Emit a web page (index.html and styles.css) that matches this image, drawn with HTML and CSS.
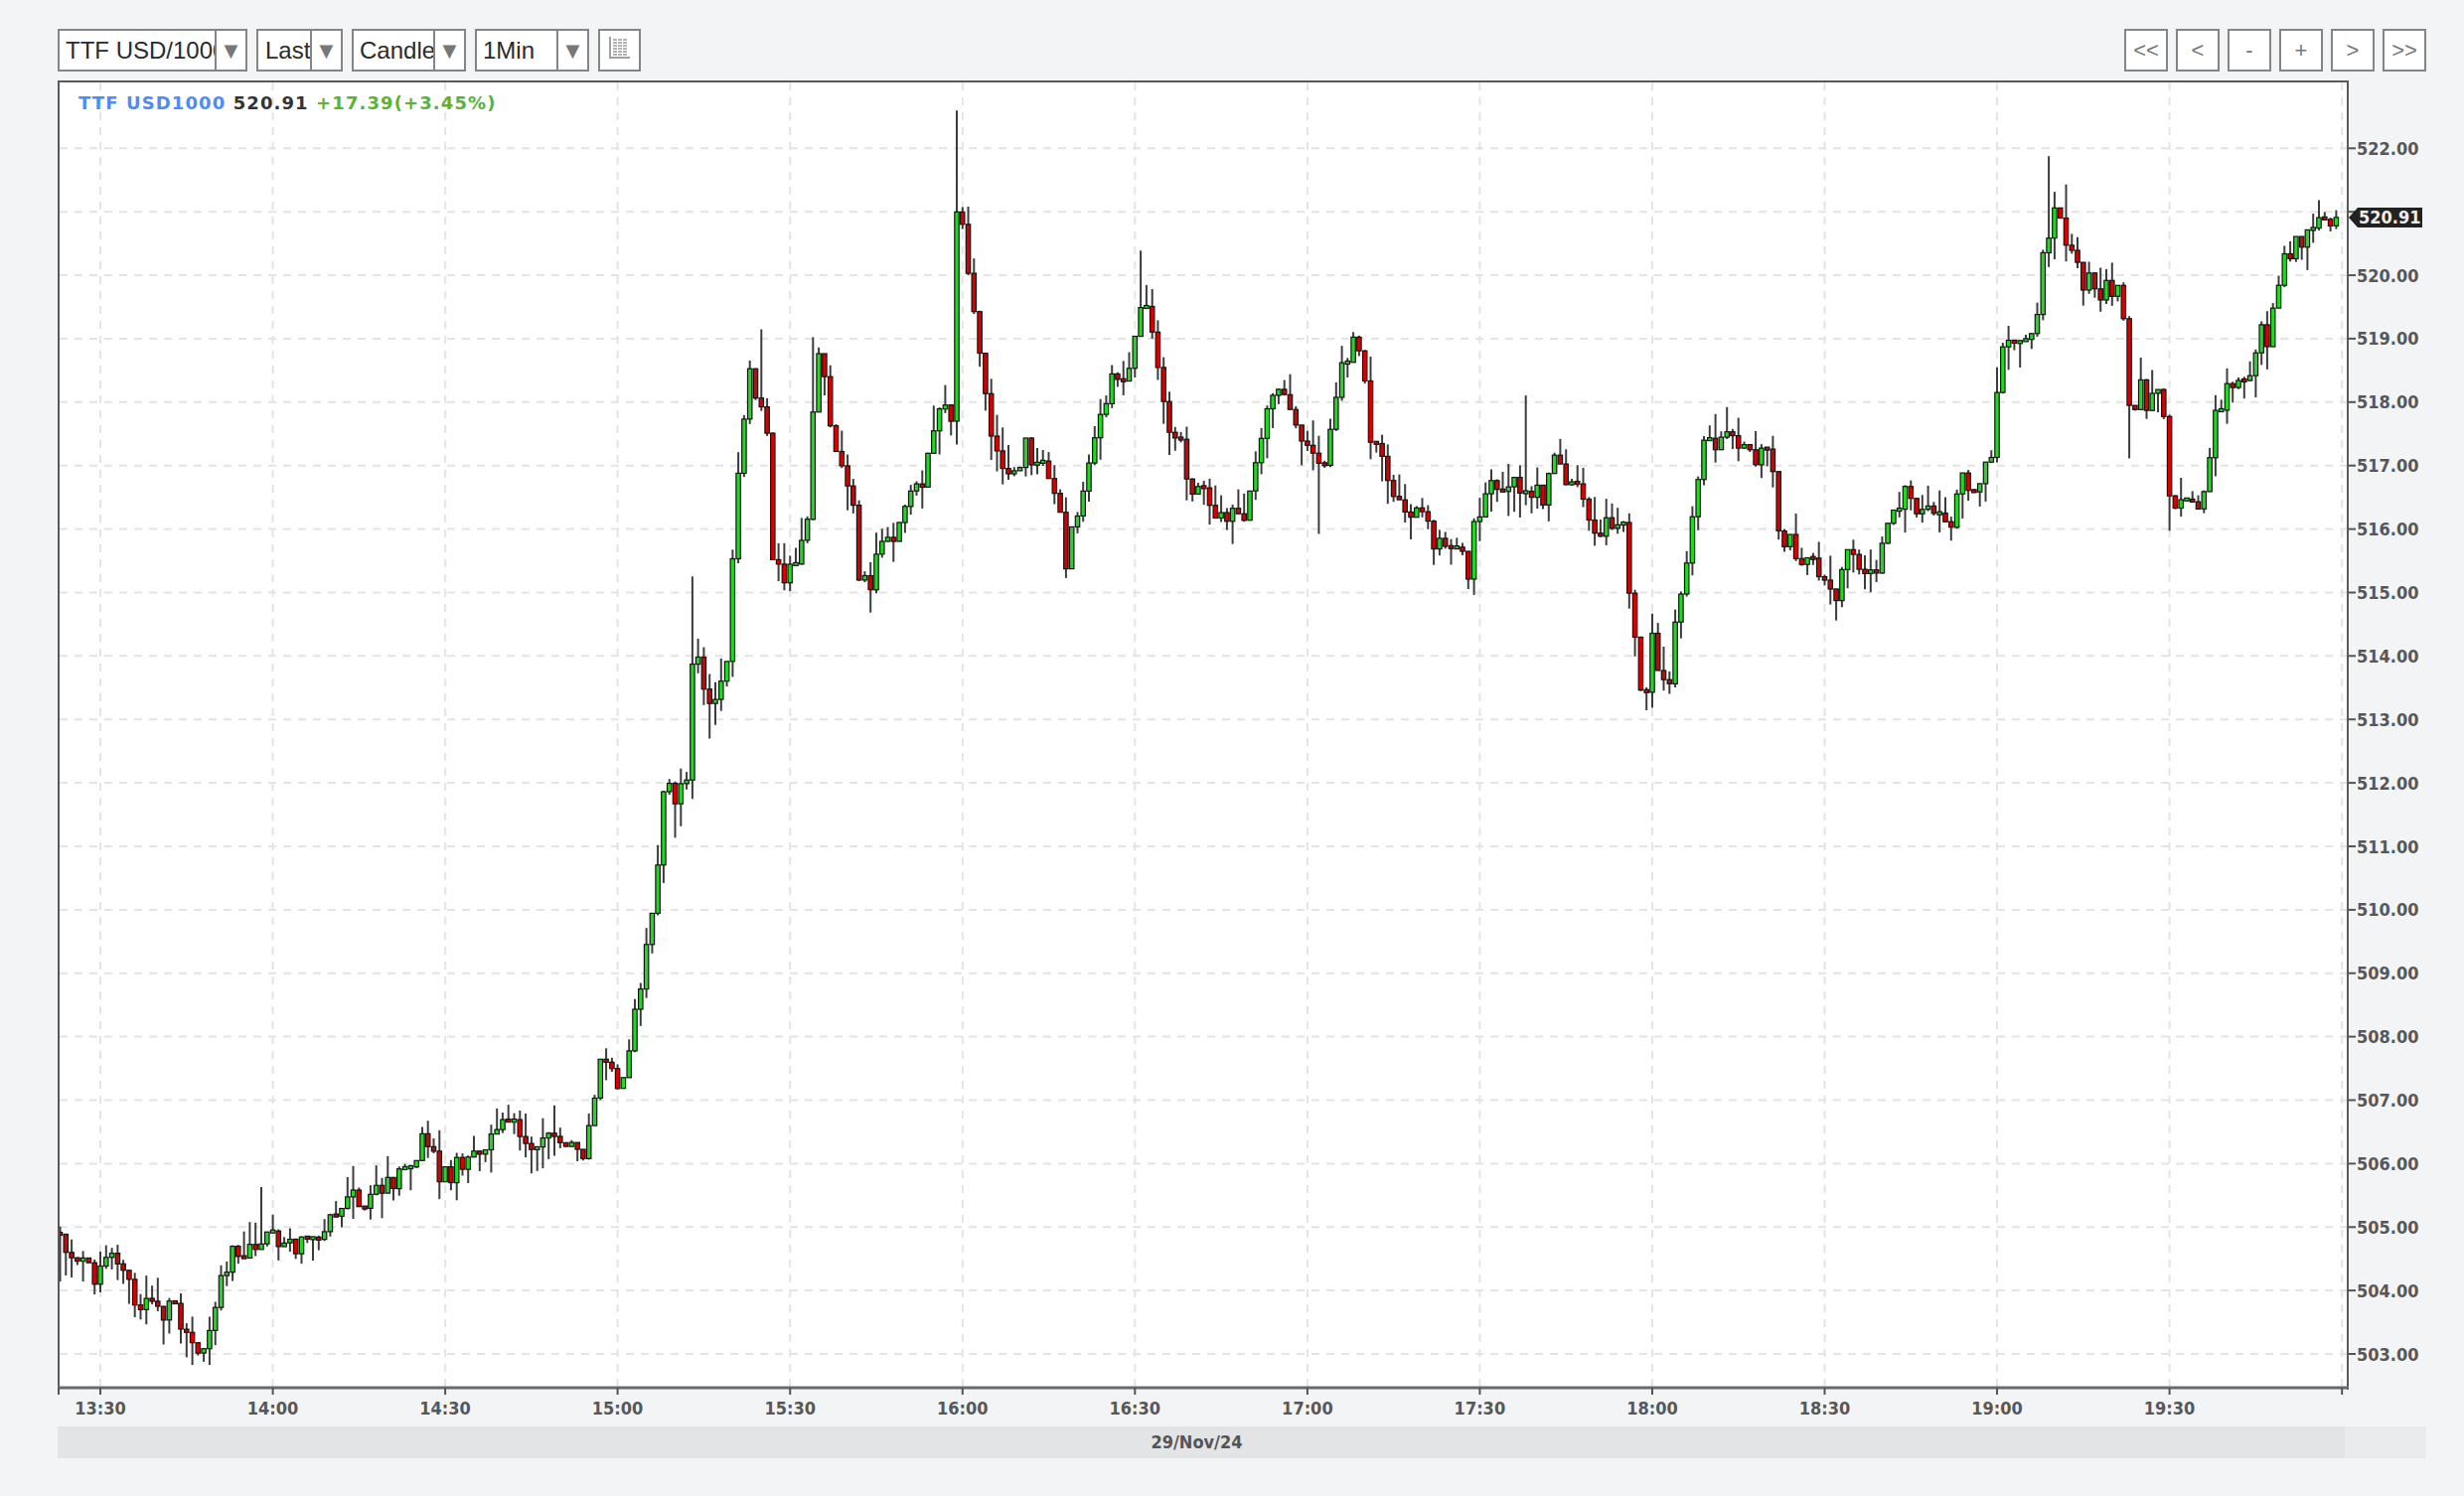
FILE: index.html
```html
<!DOCTYPE html>
<html>
<head>
<meta charset="utf-8">
<title>TTF USD1000 chart</title>
<link rel="stylesheet" href="styles.css">
</head>
<body>
<div class="page">
  <div class="toolbar">
    <div class="tools-left">
      <div class="select"><span class="sel-text w-symbol">TTF USD/1000</span><span class="sel-arrow">▼</span></div>
      <div class="select"><span class="sel-text w-last">Last</span><span class="sel-arrow">▼</span></div>
      <div class="select"><span class="sel-text w-type">Candle</span><span class="sel-arrow">▼</span></div>
      <div class="select"><span class="sel-text w-type">1Min</span><span class="sel-arrow">▼</span></div>
      <div class="btn icon-btn">
        <svg width="39" height="39" viewBox="0 0 39 39">
          <rect class="ico-line" x="9" y="6" width="2" height="22"/>
          <rect class="ico-line" x="9" y="26" width="21" height="2"/>
          <g class="ico-cell">
            <rect x="13" y="8" width="4" height="2"/><rect x="18" y="8" width="4" height="2"/><rect x="23" y="8" width="4" height="2"/>
            <rect x="13" y="11" width="4" height="2"/><rect x="18" y="11" width="4" height="2"/><rect x="23" y="11" width="4" height="2"/>
            <rect x="13" y="14" width="4" height="2"/><rect x="18" y="14" width="4" height="2"/><rect x="23" y="14" width="4" height="2"/>
            <rect x="13" y="17" width="4" height="2"/><rect x="18" y="17" width="4" height="2"/><rect x="23" y="17" width="4" height="2"/>
            <rect x="13" y="20" width="4" height="2"/><rect x="18" y="20" width="4" height="2"/><rect x="23" y="20" width="4" height="2"/>
            <rect x="13" y="23" width="4" height="2"/><rect x="18" y="23" width="4" height="2"/><rect x="23" y="23" width="4" height="2"/>
          </g>
        </svg>
      </div>
    </div>
    <div class="tools-right">
      <div class="btn nav-btn">&lt;&lt;</div>
      <div class="btn nav-btn">&lt;</div>
      <div class="btn nav-btn">-</div>
      <div class="btn nav-btn">+</div>
      <div class="btn nav-btn">&gt;</div>
      <div class="btn nav-btn">&gt;&gt;</div>
    </div>
  </div>
  <div class="chart">
    <svg id="chart" class="chart-svg" width="2384" height="1355" viewBox="0 0 2384 1355"></svg>
  </div>
  <div class="datebar">
    <div class="date-main">29/Nov/24</div>
    <div class="date-tail"></div>
  </div>
</div>
<script src="chart.js"></script>
</body>
</html>
```

FILE: styles.css
```css
html, body {
  margin: 0;
  padding: 0;
  background: #f3f4f6;
}
.page {
  padding-top: 29px;
  width: 2480px;
  height: 1506px;
  box-sizing: border-box;
}
.toolbar {
  display: flex;
  justify-content: space-between;
  align-items: center;
  margin-left: 58px;
  width: 2384px;
  height: 43px;
}
.tools-left, .tools-right {
  display: flex;
  height: 43px;
}
.tools-left { gap: 9px; }
.tools-right { gap: 8px; }
.select {
  display: flex;
  height: 43px;
  box-sizing: border-box;
  border: 2px solid #858585;
  background: #fff;
}
.sel-text {
  display: block;
  box-sizing: border-box;
  padding-left: 6px;
  overflow: hidden;
  white-space: nowrap;
  font-family: "Liberation Sans", Arial, sans-serif;
  font-size: 24px;
  line-height: 39px;
  color: #2a2a2a;
}
.w-symbol { width: 156px; }
.w-last { width: 52px; padding-left: 7px; }
.w-type { width: 80px; padding-left: 6px; }
.sel-arrow {
  display: block;
  width: 31px;
  box-sizing: border-box;
  border-left: 2px solid #858585;
  text-align: center;
  font-family: "DejaVu Sans", sans-serif;
  font-size: 18px;
  line-height: 39px;
  color: #777;
}
.btn {
  width: 44px;
  height: 43px;
  box-sizing: border-box;
  border: 2px solid #858585;
  background: #fff;
  display: flex;
  align-items: center;
  justify-content: center;
}
.icon-btn { width: 43px; }
.ico-line { fill: #a0a0a0; }
.ico-cell rect { fill: #b4b4b4; }
.nav-btn {
  font-family: "Liberation Sans", Arial, sans-serif;
  font-size: 22px;
  color: #777;
  line-height: 39px;
}
.chart {
  margin-top: 9px;
  margin-left: 58px;
  width: 2384px;
  height: 1355px;
}
.chart-svg { display: block; }
.plot-bg { fill: #fff; }
.grid {
  stroke: #e4e4e4;
  stroke-width: 2;
  stroke-dasharray: 8 7;
}
.frame {
  stroke: #5a5a5a;
  stroke-width: 2;
}
.axis-x {
  stroke: #6a6a6a;
  stroke-width: 3;
}
.tick {
  stroke: #555;
  stroke-width: 2;
}
.wick {
  stroke: #3c3c3c;
  stroke-width: 2;
}
.up { fill: #22d822; stroke: #151515; stroke-width: 1.2; }
.dn { fill: #d60000; stroke: #151515; stroke-width: 1.2; }
.ax-label {
  font-family: "DejaVu Sans Condensed", "DejaVu Sans", sans-serif;
  font-stretch: condensed;
  font-weight: bold;
  font-size: 18px;
  fill: #575757;
}
.title {
  font-family: "DejaVu Sans", sans-serif;
  font-weight: bold;
  font-size: 18px;
  letter-spacing: 1.1px;
}
.t-sym { fill: #4d8cf5; }
.t-last { fill: #333; }
.t-chg { fill: #5cb137; }
.tag-bg { fill: #222; }
.tag-text {
  font-family: "DejaVu Sans Condensed", "DejaVu Sans", sans-serif;
  font-stretch: condensed;
  font-weight: bold;
  font-size: 18px;
  fill: #eee;
}
.datebar {
  display: flex;
  margin-left: 58px;
  width: 2384px;
  height: 32px;
}
.date-main {
  width: 2302px;
  box-sizing: border-box;
  padding-right: 9px;
  background: #e3e4e6;
  text-align: center;
  font-family: "DejaVu Sans Condensed", "DejaVu Sans", sans-serif;
  font-stretch: condensed;
  font-weight: bold;
  font-size: 18px;
  line-height: 32px;
  color: #555;
}
.date-tail {
  flex: 1;
  background: #eaebed;
}
```

FILE: chart.js
```js
(function () {
  var svg = document.getElementById('chart');
  var X0 = 43, PX = 5.785, Y0 = 68.3, PY = 63.88;
  function X(m) { return X0 + m * PX; }
  function Y(p) { return Y0 + (522 - p) * PY; }
  function dp(y) { return 522 - (y - 95) * 19 / 766; }
  function dmin(x) { return Math.round((x - 64) * 30 / 110); }
  var A = [[38,790],[50,800],[60,810],[70,800],[80,805],[88,830],[100,835],[110,830],[120,850],[128,855],[135,845],[140,815],[148,795],[160,795],[170,790],[180,785],[190,795],[200,790],[210,778],[220,760],[230,765],[240,755],[250,750],[260,745],[270,725],[280,745],[290,745],[300,730],[310,730],[318,715],[330,720],[340,725],[350,715],[360,725],[370,735],[378,715],[385,665],[392,690],[400,680],[405,645],[410,620],[415,590],[420,550],[425,490],[432,510],[438,495],[442,415],[450,440],[455,455],[460,430],[465,415],[468,330],[472,295],[478,240],[485,260],[490,280],[493,360],[500,365],[505,360],[510,345],[515,325],[520,230],[525,225],[530,270],[535,290],[540,315],[545,320],[548,370],[555,370],[560,350],[565,335],[570,345],[575,330],[580,315],[588,310],[593,290],[597,265],[603,260],[607,265],[610,130],[615,155],[620,185],[625,230],[630,260],[635,290],[640,295],[645,300],[650,305],[655,280],[660,300],[665,300],[670,310],[675,320],[680,355],[685,335],[690,320],[695,300],[700,265],[705,255],[710,240],[718,245],[722,220],[728,190],[733,205],[738,235],[743,260],[748,275],[753,285],[758,305],[763,310],[768,315],[773,325],[778,325],[783,330],[788,325],[793,330],[798,310],[803,290],[808,265],[813,255],[818,250],[822,255],[826,270],[830,275],[835,280],[840,290],[845,295],[850,270],[855,235],[860,225],[865,220],[870,225],[873,280],[878,280],[883,300],[888,315],[893,325],[898,325],[903,330],[908,325],[913,340],[918,350],[923,350],[928,350],[933,355],[937,365],[940,325],[945,325],[950,305],[955,305],[960,320],[965,305],[970,310],[975,325],[980,310],[985,320],[990,290],[995,290],[1000,305],[1005,310],[1010,320],[1015,330],[1020,340],[1025,335],[1030,330],[1035,330],[1040,385],[1045,430],[1050,445],[1055,400],[1060,440],[1065,430],[1070,380],[1075,370],[1080,325],[1085,285],[1090,280],[1095,280],[1100,275],[1105,280],[1110,290],[1115,290],[1120,290],[1125,290],[1130,295],[1135,340],[1140,345],[1145,350],[1150,355],[1155,355],[1160,360],[1165,365],[1170,380],[1175,365],[1180,345],[1185,360],[1190,365],[1195,370],[1200,355],[1205,335],[1210,320],[1215,315],[1220,310],[1225,330],[1230,320],[1235,325],[1240,330],[1245,340],[1250,310],[1255,305],[1260,310],[1265,300],[1270,295],[1275,230],[1280,225],[1285,220],[1290,220],[1295,215],[1300,205],[1304,155],[1308,150],[1313,130],[1318,150],[1323,165],[1328,180],[1333,175],[1338,195],[1343,180],[1348,185],[1353,190],[1356,225],[1360,270],[1365,240],[1370,260],[1375,255],[1380,255],[1383,320],[1388,325],[1393,320],[1398,320],[1403,320],[1408,310],[1412,265],[1417,255],[1422,250],[1427,245],[1432,240],[1437,230],[1442,210],[1447,215],[1452,195],[1457,165],[1462,160],[1467,155],[1472,150],[1477,140],[1482,140],[1487,140]];
  var W = [[38,815],[104,855],[128,862],[165,755],[272,717],[317,705],[354,703],[432,533],[440,367],[452,470],[485,210],[498,370],[520,215],[557,390],[609,71],[680,368],[728,160],[843,340],[935,375],[972,252],[1049,452],[1172,395],[1306,100],[1317,118],[1360,292],[1383,338],[1478,128]];

  var seed = 20241129;
  function rnd() {
    seed = (seed + 0x6D2B79F5) | 0;
    var t = Math.imul(seed ^ (seed >>> 15), 1 | seed);
    t = (t + Math.imul(t ^ (t >>> 7), 61 | t)) ^ t;
    return ((t ^ (t >>> 14)) >>> 0) / 4294967296;
  }
  function interp(m) {
    var x = 64 + m * 110 / 30;
    if (x <= A[0][0]) return dp(A[0][1]);
    for (var i = 1; i < A.length; i++) {
      if (x <= A[i][0]) {
        var a = A[i - 1], b = A[i];
        var t = (x - a[0]) / (b[0] - a[0]);
        return dp(a[1] + (b[1] - a[1]) * t);
      }
    }
    return dp(A[A.length - 1][1]);
  }

  var M0 = -7, M1 = 389;
  var candles = {};
  var prev = interp(M0) + 0.15;
  for (var m = M0; m <= M1; m++) {
    var c = interp(m) + (rnd() - 0.5) * 0.36;
    if (m === M1) c = 520.91;
    var o = prev;
    var hi = Math.max(o, c) + Math.pow(rnd(), 2) * 0.4;
    var lo = Math.min(o, c) - Math.pow(rnd(), 2) * 0.4;
    candles[m] = { o: o, c: c, h: hi, l: lo };
    prev = c;
  }
  W.forEach(function (w) {
    var mm = dmin(w[0]);
    var cd = candles[mm];
    if (!cd) return;
    var p = dp(w[1]);
    if (p > cd.h) cd.h = p;
    if (p < cd.l) cd.l = p;
  });

  var s = [];
  function f(v) { return v.toFixed(1); }
  s.push('<rect class="plot-bg" x="1" y="1" width="2304" height="1315"/>');
  for (var p = 503; p <= 522; p++) {
    s.push('<line class="grid" x1="2" x2="2304" y1="' + f(Y(p)) + '" y2="' + f(Y(p)) + '"/>');
  }
  for (var k = 0; k <= 13; k++) {
    var gx = X(k * 30);
    s.push('<line class="grid" x1="' + f(gx) + '" x2="' + f(gx) + '" y1="2" y2="1315"/>');
  }
  for (var m2 = M0; m2 <= M1; m2++) {
    var cd2 = candles[m2];
    var cx = X(m2);
    s.push('<line class="wick" x1="' + f(cx) + '" x2="' + f(cx) + '" y1="' + f(Y(cd2.h)) + '" y2="' + f(Y(cd2.l)) + '"/>');
    var top = Y(Math.max(cd2.o, cd2.c));
    var bh = Math.abs(Y(cd2.o) - Y(cd2.c));
    if (bh < 3) { top -= (3 - bh) / 2; bh = 3; }
    s.push('<rect class="' + (cd2.c >= cd2.o ? 'up' : 'dn') + '" x="' + f(cx - 2.2) + '" y="' + f(top) + '" width="4.4" height="' + f(bh) + '"/>');
  }
  // frame
  s.push('<line class="frame" x1="0" x2="2306" y1="1" y2="1"/>');
  s.push('<line class="frame" x1="1" x2="1" y1="0" y2="1318"/>');
  s.push('<line class="frame" x1="2305" x2="2305" y1="0" y2="1318"/>');
  s.push('<line class="axis-x" x1="0" x2="2306" y1="1316" y2="1316"/>');
  // x ticks & labels
  var times = ['13:30','14:00','14:30','15:00','15:30','16:00','16:30','17:00','17:30','18:00','18:30','19:00','19:30'];
  s.push('<line class="tick" x1="1" x2="1" y1="1316" y2="1323"/>');
  for (var k2 = 0; k2 <= 13; k2++) {
    var tx = X(k2 * 30);
    s.push('<line class="tick" x1="' + f(tx) + '" x2="' + f(tx) + '" y1="1316" y2="1323"/>');
    if (k2 < 13) s.push('<text class="ax-label" text-anchor="middle" x="' + f(tx) + '" y="1343">' + times[k2] + '</text>');
  }
  // y ticks & labels (521.00 sits under the last-price tag)
  for (var p2 = 503; p2 <= 522; p2++) {
    var ty = Y(p2);
    s.push('<line class="tick" x1="2306" x2="2313" y1="' + f(ty) + '" y2="' + f(ty) + '"/>');
    if (p2 !== 521) s.push('<text class="ax-label" x="2314" y="' + f(ty + 6.5) + '">' + p2.toFixed(2) + '</text>');
  }
  // price tag
  var py = Y(520.91);
  s.push('<polygon class="tag-bg" points="2306,' + f(py) + ' 2315,' + f(py - 10) + ' 2380,' + f(py - 10) + ' 2380,' + f(py + 10) + ' 2315,' + f(py + 10) + '"/>');
  s.push('<text class="tag-text" x="2316" y="' + f(py + 6.5) + '">520.91</text>');
  // title
  s.push('<text class="title" x="21" y="29"><tspan class="t-sym">TTF USD1000</tspan> <tspan class="t-last">520.91</tspan> <tspan class="t-chg">+17.39(+3.45%)</tspan></text>');
  svg.innerHTML = s.join('');
})();
```
